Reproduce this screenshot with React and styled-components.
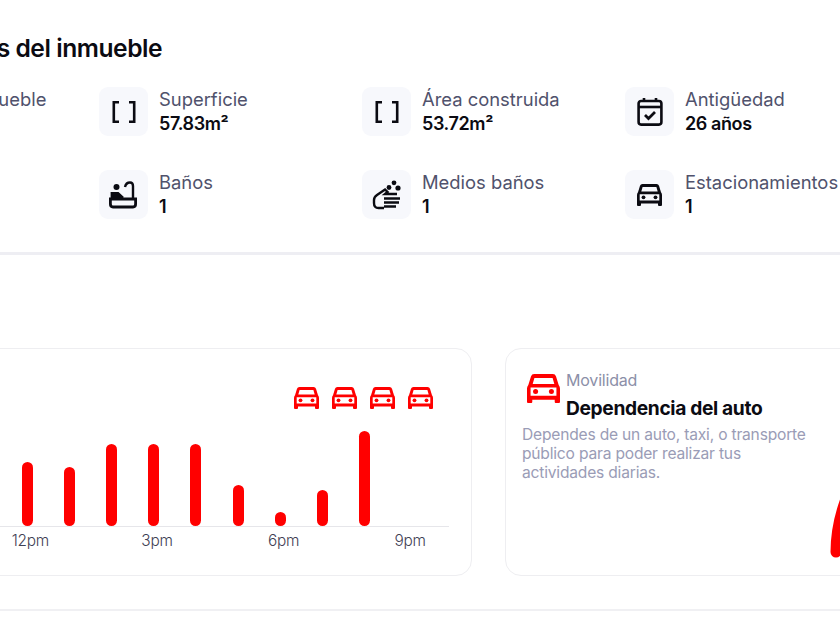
import React from "react";
import styled, { createGlobalStyle } from "styled-components";

const Global = createGlobalStyle`
  html, body { margin: 0; padding: 0; background: #fff; }
  body { font-family: "Inter", "Liberation Sans", sans-serif; color: #0b0b12; overflow: hidden; }
`;

const Viewport = styled.div`
  width: 840px;
  height: 630px;
  overflow: hidden;
`;

const Page = styled.main`
  width: 1400px;
  margin-left: -164px;
`;

const DetailsSection = styled.section`
  width: 1400px;
  height: 219px;
  padding-top: 33px;
  border-bottom: 3px solid #eeeef3;
`;

const Title = styled.h2`
  margin: 0;
  font-size: 24.6px;
  line-height: 30px;
  font-weight: 600;
  letter-spacing: -0.45px;
  color: #0b0b12;
`;

const FeatureGrid = styled.div`
  display: grid;
  grid-template-columns: repeat(4, 263px);
  grid-auto-rows: 49px;
  row-gap: 34px;
  margin-top: 24px;
`;

const Feature = styled.div`
  display: flex;
  gap: 11px;
  align-items: flex-start;
`;

const IconBox = styled.div`
  flex: none;
  width: 49px;
  height: 49px;
  border-radius: 9px;
  background: #f7f8fc;
  display: flex;
  align-items: center;
  justify-content: center;
`;

const FeatureText = styled.div`
  display: flex;
  flex-direction: column;
  white-space: nowrap;
`;

const Label = styled.span`
  font-size: 18.4px;
  line-height: 24px;
  font-weight: 400;
  color: #50526c;
`;

const Value = styled.span`
  margin-top: 1px;
  font-size: 18px;
  line-height: 24px;
  font-weight: 600;
  letter-spacing: -0.4px;
  color: #0b0b12;
`;

const Charts = styled.section`
  display: flex;
  gap: 33px;
  margin-top: 93px;
  padding-bottom: 33px;
  border-bottom: 2px solid #f0f0f3;
`;

const Card = styled.div`
  box-sizing: border-box;
  height: 228px;
  border: 1px solid #eeeef1;
  border-radius: 16px;
  background: #fff;
  flex: none;
`;

const ChartCard = styled(Card)`
  width: 636px;
  display: flex;
  flex-direction: column;
  padding: 38px 22px 0 21px;
`;

const CarRow = styled.div`
  display: flex;
  justify-content: flex-end;
  gap: 13px;
  padding-right: 16px;
  color: #ff0000;
  height: 22px;
`;

const Bars = styled.div`
  display: flex;
  align-items: flex-end;
  gap: 31.2px;
  height: 117px;
  padding-left: 37px;
  border-bottom: 1px solid #e6e6ea;
`;

const Bar = styled.div`
  width: 11px;
  flex: none;
  border-radius: 6px;
  background: #ff0000;
  height: ${(p) => p.$h}px;
`;

const Hours = styled.div`
  display: flex;
  margin: 4px 0 0 -17.5px;
`;

const Hour = styled.span`
  flex: none;
  width: 126.6px;
  text-align: center;
  font-size: 15.4px;
  line-height: 20px;
  letter-spacing: -0.2px;
  font-weight: 300;
  color: #3f4154;
`;

const MobilityCard = styled(Card)`
  width: 500px;
  display: flex;
  padding: 25px 0 0 16px;
  gap: 12px;
`;

const MobilityText = styled.div`
  width: 296px;
  flex: none;
`;

const MobilityHead = styled.div`
  display: flex;
  gap: 6px;
  padding-left: 5px;
  color: #ff0000;
`;

const HeadLabels = styled.div`
  display: flex;
  flex-direction: column;
  margin-top: -4px;
`;

const Eyebrow = styled.span`
  font-size: 16px;
  line-height: 20px;
  letter-spacing: -0.2px;
  color: #8c8fa8;
`;

const CardTitle = styled.h3`
  margin: 6px 0 0;
  font-size: 19.2px;
  line-height: 24px;
  font-weight: 700;
  letter-spacing: -0.35px;
  color: #0b0b12;
`;

const Description = styled.p`
  margin: 5px 0 0;
  font-size: 15.6px;
  line-height: 19px;
  letter-spacing: -0.2px;
  color: #9a9cb6;
`;

const Gauge = styled.svg`
  flex: none;
  align-self: flex-end;
  margin-bottom: 14px;
`;

const BlackGlyph = styled.span`
  display: flex;
  color: #0b0b12;
`;

const CarIcon = ({ size = 25 }) => (
  <svg width={size} height={(size * 22) / 25} viewBox="0 0 25 22" style={{ flex: "none" }}>
    <path
      fill="currentColor"
      fillRule="evenodd"
      d="M5.5 0H19.5A2.6 2.6 0 0 1 22 1.8L24 8.3Q25 9.5 25 11V21Q25 22 24 22H22Q21 22 21 21V19.5H4V21Q4 22 3 22H1Q0 22 0 21V11Q0 9.5 1 8.3L3 1.8A2.6 2.6 0 0 1 5.5 0ZM5.6 3 4.3 7.5H20.7L19.4 3ZM2.7 10.2V16.5H22.3V10.2Z"
    />
    <circle cx="6.5" cy="13.3" r="1.9" fill="currentColor" />
    <circle cx="18.5" cy="13.3" r="1.9" fill="currentColor" />
  </svg>
);

const BracketIcon = () => (
  <svg width="24" height="22" viewBox="0 0 24 22" fill="none" stroke="#0b0b12" strokeWidth="2.6">
    <path d="M7 1.3H1.8V20.7H7" />
    <path d="M17 1.3H22.2V20.7H17" />
  </svg>
);

const BathIcon = () => (
  <svg width="28" height="28" viewBox="0 0 28 28" fill="none" stroke="#0b0b12" strokeWidth="2.8" style={{ marginLeft: "-1px" }}>
    <circle cx="7.5" cy="6" r="3" fill="#0b0b12" stroke="none" />
    <path d="M4 26H24Q26.6 26 26.6 23V18H1.4V23Q1.4 26 4 26Z" />
    <path d="M3 17V12.5H9L14 17" fill="#0b0b12" />
    <path d="M16 6Q17 1.5 21 1.5Q24 1.5 24 5V18" strokeWidth="2.4" />
  </svg>
);

const SoapIcon = () => (
  <svg width="29" height="30" viewBox="0 0 29 30" fill="none" stroke="#0b0b12" strokeWidth="2.4">
    <circle cx="22" cy="2.8" r="2.4" fill="#0b0b12" stroke="none" />
    <circle cx="17" cy="7.5" r="2.4" fill="#0b0b12" stroke="none" />
    <circle cx="26" cy="8" r="2.6" fill="#0b0b12" stroke="none" />
    <path d="M12 28H6.5Q2 28 2 23V20Q2 17 5 15L13 9.5 15.5 12 13 14H25" />
    <path d="M12 18.5H28M12 22.5H27M12 26.5H24" />
  </svg>
);

const CalendarIcon = () => (
  <svg width="26" height="29" viewBox="0 0 26 29" fill="none" stroke="#0b0b12" strokeWidth="2.6">
    <rect x="1.6" y="4" width="22.8" height="23.6" rx="2.5" />
    <path d="M1.6 10H24.4" />
    <path d="M7 1V4M19 1V4" />
    <path d="M8 18L11.5 21.5 18 15" strokeWidth="2.8" />
  </svg>
);

const features = [
  ["Tipo de inmueble", "Casa", null],
  ["Superficie", "57.83m²", <BracketIcon key="a" />],
  ["Área construida", "53.72m²", <BracketIcon key="b" />],
  ["Antigüedad", "26 años", <CalendarIcon key="c" />],
  ["", "", null],
  ["Baños", "1", <BathIcon key="d" />],
  ["Medios baños", "1", <SoapIcon key="e" />],
  ["Estacionamientos", "1", <BlackGlyph key="f"><CarIcon /></BlackGlyph>],
];

const barHeights = [82, 82, 82, 64, 59, 82, 82, 82, 41, 14, 36, 95, 0];
const hours = ["9am", "12pm", "3pm", "6pm", "9pm"];

export default function App() {
  return (
    <Viewport>
      <Global />
      <Page>
        <DetailsSection>
          <Title>Características del inmueble</Title>
          <FeatureGrid>
            {features.map(([label, value, icon], i) => (
              <Feature key={i}>
                <IconBox>{icon}</IconBox>
                <FeatureText>
                  <Label>{label}</Label>
                  <Value>{value}</Value>
                </FeatureText>
              </Feature>
            ))}
          </FeatureGrid>
        </DetailsSection>
        <Charts>
          <ChartCard>
            <CarRow>
              <CarIcon /><CarIcon /><CarIcon /><CarIcon />
            </CarRow>
            <Bars>
              {barHeights.map((h, i) => (
                <Bar key={i} $h={h} />
              ))}
            </Bars>
            <Hours>
              {hours.map((h) => (
                <Hour key={h}>{h}</Hour>
              ))}
            </Hours>
          </ChartCard>
          <MobilityCard>
            <MobilityText>
              <MobilityHead>
                <CarIcon size={33} />
                <HeadLabels>
                  <Eyebrow>Movilidad</Eyebrow>
                  <CardTitle>Dependencia del auto</CardTitle>
                </HeadLabels>
              </MobilityHead>
              <Description>
                Dependes de un auto, taxi, o transporte público para poder realizar tus actividades diarias.
              </Description>
            </MobilityText>
            <Gauge width="60" height="70" viewBox="0 0 60 70" fill="none">
              <path d="M6 61Q6 35 16 8" stroke="#ff0000" strokeWidth="11" strokeLinecap="round" />
            </Gauge>
          </MobilityCard>
        </Charts>
      </Page>
    </Viewport>
  );
}
